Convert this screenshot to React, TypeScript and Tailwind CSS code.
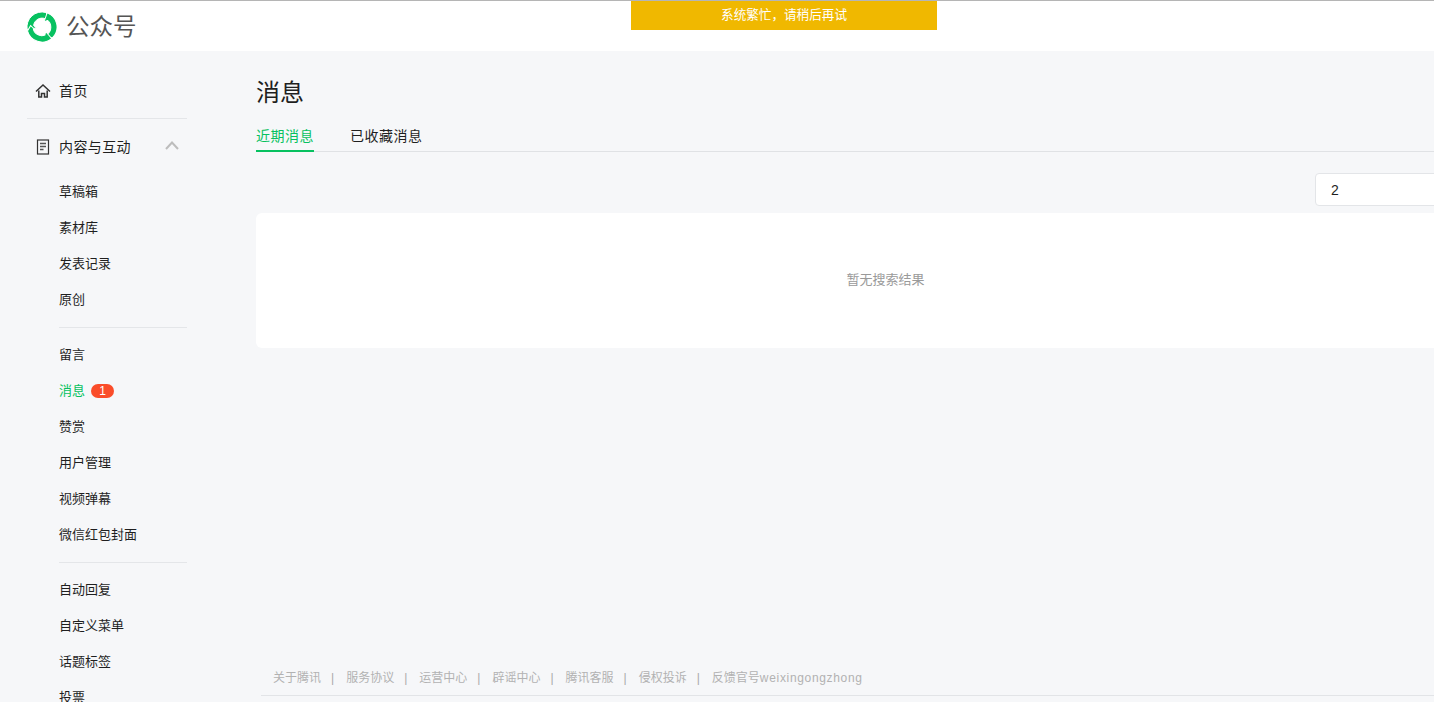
const FONT = "font-['Liberation_Sans','Noto_Sans_CJK_SC',sans-serif]";

// one blade of the logo, repeated three times round the centre
const BLADE = "M.2 17.600A15 15 0 0 1 18.900 .5L21.900 5.800 18.600 6.900A8.500 8.500 0 0 0 6.600 13.500L9.300 15.900Z";

const Logo = () => (
  <svg width="30" height="30" viewBox="0 0 30 30" fill="#07c160" stroke="#fff" strokeWidth="1" className="mt-[1px] shrink-0">
    <path d={BLADE} />
    <path d={BLADE} transform="rotate(120 15 15)" />
    <path d={BLADE} transform="rotate(240 15 15)" />
  </svg>
);

const HomeIcon = () => (
  <svg width="16" height="16" viewBox="0 0 16 16" fill="none" stroke="#333" strokeWidth="1.500" className="shrink-0">
    <path d="M1 8.500 8 2l7 6.500" />
    <path d="M3.800 7.500V14h2.700v-3.500h3V14h2.700V7.500" />
  </svg>
);

const DocIcon = () => (
  <svg width="16" height="16" viewBox="0 0 16 16" fill="none" className="shrink-0">
    <rect x="2.500" y="1" width="11" height="14" stroke="#333" strokeWidth="1.200" />
    <path d="M5 4.500h6M5 7.500h6M5 10.500h3.500" stroke="#555" strokeWidth="1.300" />
  </svg>
);

const groupOne = ["草稿箱", "素材库", "发表记录", "原创"];
const groupTwo = ["留言", "消息", "赞赏", "用户管理", "视频弹幕", "微信红包封面"];
const groupThree = ["自动回复", "自定义菜单", "话题标签", "投票"];
const footerLinks = ["关于腾讯", "服务协议", "运营中心", "辟谣中心", "腾讯客服", "侵权投诉"];

const SubItem = ({ label }: { label: string }) => (
  <div className={`flex h-9 shrink-0 items-center pl-[59px] text-[13px] ${label === "消息" ? "text-[#07c160]" : "text-[#1f1f1f]"}`}>
    {label}
    {label === "消息" && (
      <span className="ml-[6px] flex h-[14px] w-[23px] items-center justify-center rounded-full bg-[#fa4d2a] text-xs text-white">
        1
      </span>
    )}
  </div>
);

const Divider = () => <div className="my-[9px] ml-[59px] h-px w-[128px] shrink-0 bg-[#e4e6e9]" />;

export default function App() {
  return (
    <div className={`relative flex h-[702px] w-full flex-col overflow-hidden border-t border-[#b5b5b5] bg-[#f6f7f9] ${FONT}`}>
      {/* header */}
      <header className="flex h-[50px] shrink-0 items-center gap-[9px] bg-white pl-[27px]">
        <Logo />
        <span className="pt-[3px] text-[23.500px] text-[#555]">公众号</span>
      </header>

      {/* toast */}
      <div className="absolute left-[631px] top-0 flex h-[29px] w-[306px] items-center justify-center bg-[#f0b800] text-[12.600px] text-white">
        {"系统繁忙\uFF0C请稍后再试"}
      </div>

      <div className="flex min-h-0 flex-1">
        {/* sidebar */}
        <aside className="flex w-[256px] shrink-0 flex-col overflow-hidden pt-[22px]">
          <div className="flex h-9 shrink-0 items-center gap-2 pl-[35px] text-sm tracking-[0.4px] text-[#1f1f1f]">
            <HomeIcon />
            首页
          </div>
          <div className="mt-[9px] mb-[10px] ml-[27px] h-px w-[160px] shrink-0 bg-[#e4e6e9]" />
          <div className="flex h-9 w-[187px] shrink-0 items-center gap-2 pl-[35px] text-sm tracking-[0.4px] text-[#1f1f1f]">
            <DocIcon />
            内容与互动
            <svg width="14" height="9" viewBox="0 0 14 9" fill="none" stroke="#bdbdbd" strokeWidth="2" className="ml-auto mr-[8px] mb-[3px]">
              <path d="M1 8l6-6.500L13 8" />
            </svg>
          </div>
          <div className="h-[9px] shrink-0" />
          {groupOne.map((item) => (
            <SubItem key={item} label={item} />
          ))}
          <Divider />
          {groupTwo.map((item) => (
            <SubItem key={item} label={item} />
          ))}
          <Divider />
          {groupThree.map((item) => (
            <SubItem key={item} label={item} />
          ))}
        </aside>

        {/* main */}
        <main className="flex min-w-0 flex-1 flex-col overflow-hidden">
          <h1 className="mt-[25px] h-[34px] text-2xl leading-[34px] text-[#1f1f1f]">消息</h1>
          <div className="mt-[10px] flex h-[32px] w-[1259px] shrink-0 gap-9 border-b border-[#e0e2e5] text-sm tracking-[0.5px]">
            <div className="h-[32px] border-b-2 border-[#07c160] pt-[6px] text-[#07c160]">近期消息</div>
            <div className="pt-[6px] text-[#1f1f1f]">已收藏消息</div>
          </div>
          <div className="mt-[21px] flex w-[1259px] shrink-0 justify-end">
            <div className="flex h-[33px] w-[200px] items-center rounded border border-[#e3e5e8] bg-white pl-[15px] text-sm text-[#1f1f1f]">
              2
            </div>
          </div>
          <div className="mt-[7px] flex h-[135px] w-[1259px] shrink-0 items-center justify-center rounded-md bg-white pb-[2px] text-[13px] text-[#9a9a9a]">
            暂无搜索结果
          </div>

          {/* footer */}
          <footer className="mt-auto ml-[5px] w-[1254px] shrink-0 pb-[6px]">
            <div className="flex h-[34px] items-center border-b border-[#e2e4e7] pb-[2px] pl-3 text-xs text-[#b2b2b2]">
              {footerLinks.map((link) => (
                <span key={link} className="flex items-center">
                  {link}
                  <span className="ml-[10px] mr-[12px] text-[#a9a9a9]">|</span>
                </span>
              ))}
              <span>
                反馈官号<span className="tracking-[0.67px]">weixingongzhong</span>
              </span>
            </div>
          </footer>
        </main>
      </div>
    </div>
  );
}
